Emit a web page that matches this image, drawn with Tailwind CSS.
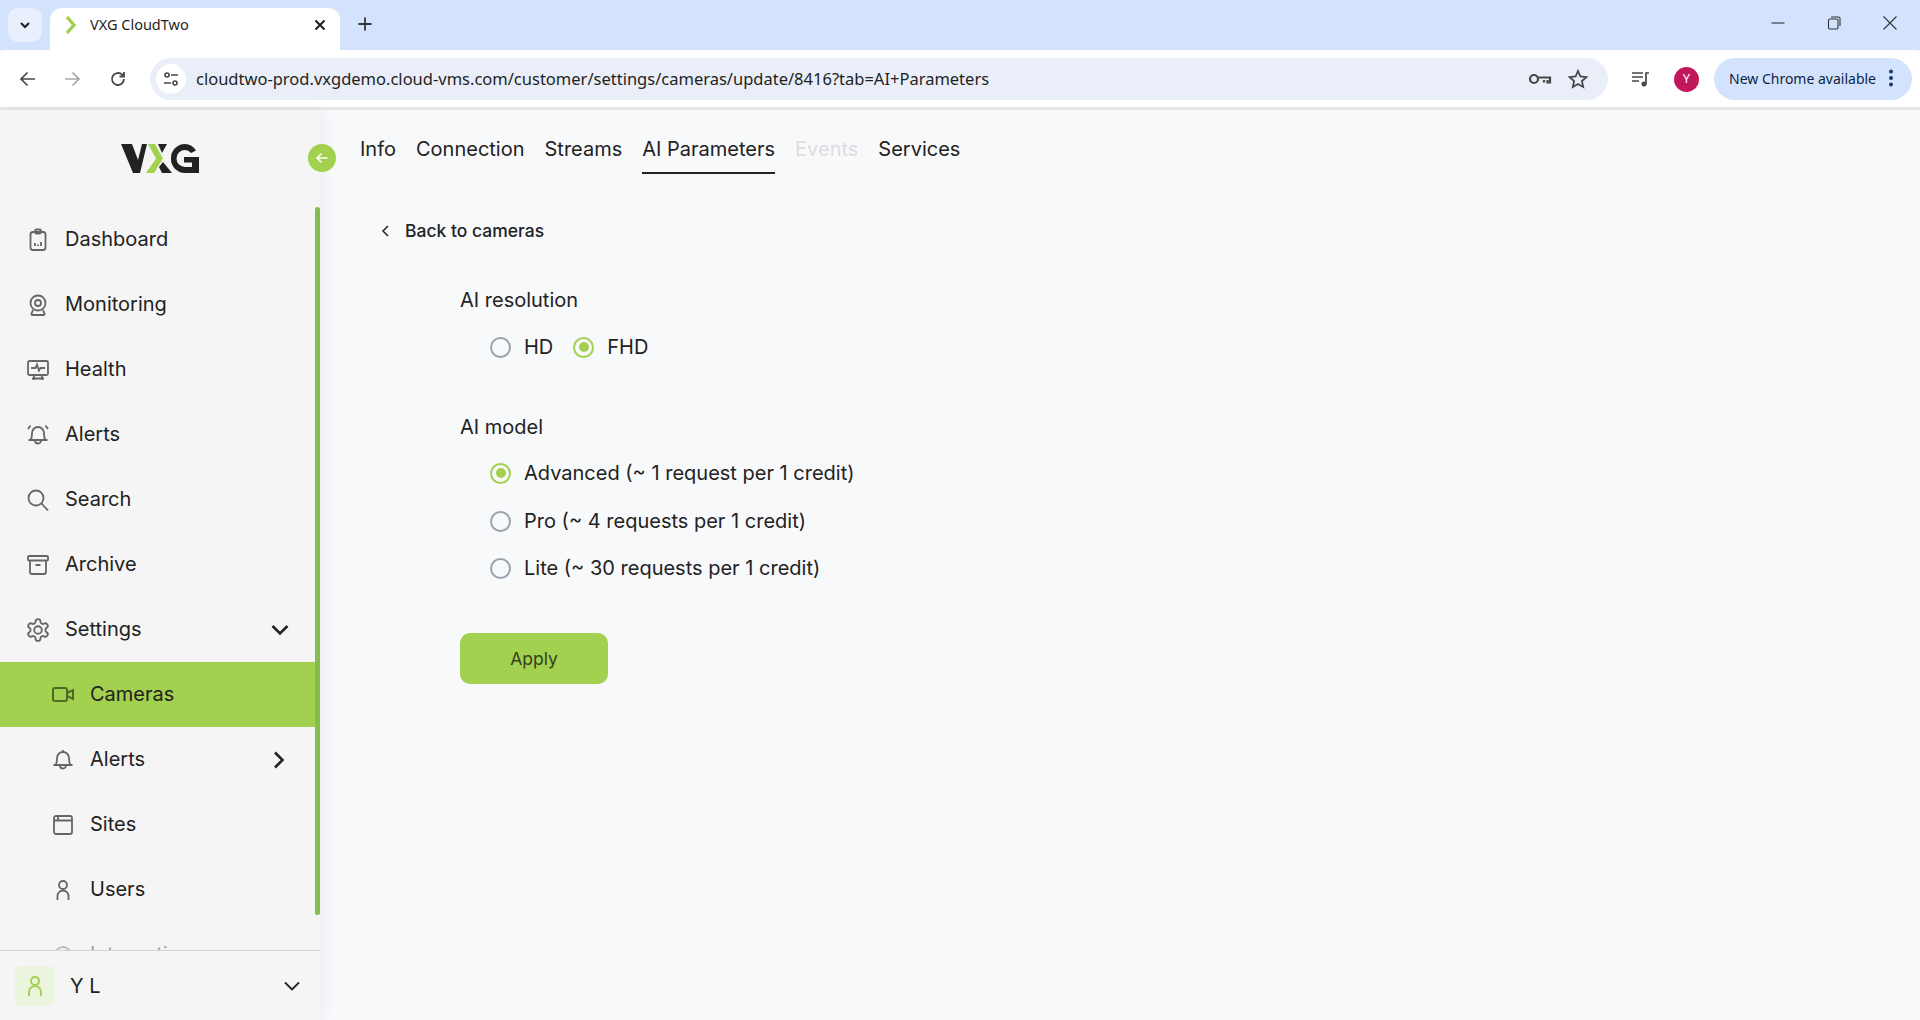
<!DOCTYPE html>
<html lang="en">
<head>
    <meta charset="UTF-8">
    <title>VXG CloudTwo</title>
    <script src="https://cdn.jsdelivr.net/npm/@tailwindcss/browser@4"></script>
</head>
<body class="h-[1020px] w-[1920px] overflow-hidden flex flex-col bg-[#f8f9fb] font-['Inter',sans-serif] text-[#222222]">

    <!-- browser tab strip -->
    <div class="h-[50px] shrink-0 bg-[#d3e3fd] flex items-end relative font-['Noto_Sans',sans-serif]">
        <div class="w-[34px] h-[34px] ml-[8px] mb-[8px] rounded-[10px] bg-[#e9f0fd] flex items-center justify-center">
            <svg class="w-4 h-4" viewBox="0 0 16 16" fill="none" stroke="#1f1f1f" stroke-width="2"><path d="M4 6l4 4 4-4"/></svg>
        </div>
        <div class="w-[290px] h-[42px] ml-[8px] bg-white rounded-t-[12px] flex items-center pl-[14px] pr-[12px] pb-[8px]">
            <svg class="w-[16px] h-[20px] shrink-0" viewBox="0 0 16 20" fill="none" stroke="#a2d04f" stroke-width="3.4"><path d="M3 2l7 8-7 8"/></svg>
            <span class="ml-[10px] flex-1 text-[14.5px] text-[#1f1f1f]">VXG CloudTwo</span>
            <svg class="w-[16px] h-[16px]" viewBox="0 0 16 16" fill="none" stroke="#1f1f1f" stroke-width="2"><path d="M3.5 3.5l9 9M12.5 3.5l-9 9"/></svg>
        </div>
        <svg class="w-[18px] h-[18px] ml-[16px] mb-[17px]" viewBox="0 0 18 18" fill="none" stroke="#333" stroke-width="1.8"><path d="M9 2.5v13M2.5 9h13"/></svg>
        <div class="ml-auto flex items-center h-full pb-[4px] pr-[22px] gap-[40px]">
            <svg class="w-[16px] h-[16px]" viewBox="0 0 16 16" fill="none" stroke="#333" stroke-width="1.1"><path d="M1.5 8h13"/></svg>
            <svg class="w-[16px] h-[16px]" viewBox="0 0 16 16" fill="none" stroke="#333" stroke-width="1.1"><rect x="2.5" y="4" width="9.5" height="10" rx="1.5"/><path d="M5 2h7.5a1.5 1.5 0 0 1 1.5 1.5V11"/></svg>
            <svg class="w-[16px] h-[16px]" viewBox="0 0 16 16" fill="none" stroke="#333" stroke-width="1.1"><path d="M1.5 1.5l13 13M14.5 1.5l-13 13"/></svg>
        </div>
    </div>

    <!-- browser toolbar -->
    <div class="h-[60px] shrink-0 bg-white border-b-[3px] border-[#e6e6e6] rounded-t-[8px] flex items-center pt-[1px] pl-[18px] pr-[8px] font-['Noto_Sans',sans-serif]">
        <svg class="w-[20px] h-[20px]" viewBox="0 0 20 20" fill="none" stroke="#474747" stroke-width="1.7"><path d="M17 10H3.5M9.5 3.5L3 10l6.5 6.5"/></svg>
        <svg class="w-[20px] h-[20px] ml-[24px]" viewBox="0 0 20 20" fill="none" stroke="#a8a8a8" stroke-width="1.7"><path d="M3 10h13.5M10.500 3.500L17 10l-6.500 6.500"/></svg>
        <svg class="w-[20px] h-[20px] ml-[26px]" viewBox="0 0 20 20" fill="none" stroke="#474747" stroke-width="1.8"><path d="M16 10a6 6 0 1 1-1.8-4.3L16 7.5M16 3v4.5h-4.5"/></svg>
        <div class="w-[1458px] h-[42px] ml-[22px] rounded-full bg-[#e9eef8] flex items-center pl-[6px] pr-[19px]">
            <div class="w-[30px] h-[30px] rounded-full bg-white flex items-center justify-center">
                <svg class="w-[18px] h-[18px]" viewBox="0 0 18 18" fill="none" stroke="#474747" stroke-width="1.6"><circle cx="5" cy="5" r="2"/><path d="M9 5h7M2 13h7"/><circle cx="13" cy="13" r="2"/></svg>
            </div>
            <span class="ml-[10px] flex-1 text-[16.5px] text-[#1f1f1f] whitespace-nowrap">cloudtwo-prod.vxgdemo.cloud-vms.com/customer/settings/cameras/update/8416?tab=AI+Parameters</span>
            <svg class="w-[24px] h-[16px]" viewBox="0 0 24 16" fill="none" stroke="#474747" stroke-width="2.2"><circle cx="6" cy="8" r="4"/><path d="M10 6.5h12v5h-2.5V9M16 9v2.5"/></svg>
            <svg class="w-[22px] h-[22px] ml-[15px]" viewBox="0 0 22 22" fill="none" stroke="#474747" stroke-width="1.8"><path d="M11 3l2.400 5.500 6 .6-4.500 4 1.300 5.900L11 16l-5.200 3 1.300-5.900-4.500-4 6-.6z"/></svg>
        </div>
        <svg class="w-[22px] h-[22px] ml-[22px]" viewBox="0 0 22 22" fill="none" stroke="#474747" stroke-width="1.7"><path d="M2 5h11M2 9h11M2 13h7"/><circle cx="14" cy="16" r="2.5" fill="#474747" stroke="none"/><path d="M16 16V5h3"/></svg>
        <div class="w-[25px] h-[25px] ml-[22px] rounded-full bg-[#c2185b] text-white text-[13px] flex items-center justify-center">Y</div>
        <div class="w-[198px] h-[42px] ml-[15px] rounded-full bg-[#d3e3fd] flex items-center pl-[15px] pb-[2px] text-[#0b1f45] text-[14px] whitespace-nowrap">
            New Chrome available
            <svg class="w-[4px] h-[18px] ml-[13px]" viewBox="0 0 4 18" fill="#1b3a6b"><circle cx="2" cy="2.5" r="2"/><circle cx="2" cy="9" r="2"/><circle cx="2" cy="15.5" r="2"/></svg>
        </div>
    </div>

    <div class="flex-1 flex min-h-0">
        <!-- sidebar -->
        <aside class="w-[320px] shrink-0 bg-[#f5f5f5] flex flex-col relative shadow-[4px_0_12px_rgba(30,40,70,0.05)]">
            <div class="h-[97px] shrink-0 flex items-start justify-center pt-[33px]">
                <svg class="w-[78px] h-[30px]" viewBox="0 0 78 30">
                    <polygon points="0,1 11,1 17,17 21,1 26,1 19,30 12,30" fill="#222"/>
                    <polygon points="27,1 34,1 42,15.5 33,30 25,30 35,15.5" fill="#a2d04f"/>
                    <polygon points="37,1 46,1 41,10" fill="#222"/>
                    <polygon points="42,19 51,30 41,30 38,24" fill="#222"/>
                    <path d="M75 7.5A14 14 0 0 0 64 1a14 14 0 0 0-14 14.5A14 14 0 0 0 64 30h14V14H63v5.5h8V24h-7a8.500 8.500 0 0 1 0-17 8 8 0 0 1 6 3z" fill="#222"/>
                </svg>
            </div>

            <div class="flex-1 min-h-0 overflow-hidden text-[20px] relative">
                <div class="absolute right-0 top-0 w-[5px] h-[708px] rounded-full bg-[#84bd4b]"></div>

                <div class="h-[65px] flex items-center pl-[27px]">
                    <svg class="w-[22px] h-[24px] text-[#666]" viewBox="0 0 22 24" fill="none" stroke="currentColor" stroke-width="1.8"><rect x="3.5" y="4" width="15" height="18" rx="2.5"/><rect x="8" y="1.5" width="6" height="4" rx="1.5"/><path d="M8 18v-3M11 18v-1.5M14 18v-4"/></svg>
                    <span class="ml-[16px] -mt-[2px]">Dashboard</span>
                </div>
                <div class="h-[65px] flex items-center pl-[27px]">
                    <svg class="w-[22px] h-[24px] text-[#666]" viewBox="0 0 22 24" fill="none" stroke="currentColor" stroke-width="1.8"><circle cx="11" cy="10" r="7.5"/><circle cx="11" cy="10" r="3"/><path d="M6 17l-1.5 3.5a1 1 0 0 0 1 1.5h11a1 1 0 0 0 1-1.5L16 17"/></svg>
                    <span class="ml-[16px] -mt-[2px]">Monitoring</span>
                </div>
                <div class="h-[65px] flex items-center pl-[27px]">
                    <svg class="w-[22px] h-[24px] text-[#666]" viewBox="0 0 22 24" fill="none" stroke="currentColor" stroke-width="1.8"><rect x="1" y="3" width="20" height="14" rx="1.5"/><path d="M4 10h4.5l1.5-3.5 2 6 1.5-2.5H18M7 17v5M15 17v5M5 20.5h12"/></svg>
                    <span class="ml-[16px] -mt-[2px]">Health</span>
                </div>
                <div class="h-[65px] flex items-center pl-[27px]">
                    <svg class="w-[22px] h-[24px] text-[#666]" viewBox="0 0 22 24" fill="none" stroke="currentColor" stroke-width="1.8"><path d="M3.5 17c1.500-2 1.500-4 1.500-7a6 6 0 0 1 12 0c0 3 0 5 1.500 7zM1.500 17h19M8 17.500a3 3 0 0 0 6 0M1 6l2.500-3.500M21 6l-2.500-3.500"/></svg>
                    <span class="ml-[16px] -mt-[2px]">Alerts</span>
                </div>
                <div class="h-[65px] flex items-center pl-[27px]">
                    <svg class="w-[22px] h-[24px] text-[#666]" viewBox="0 0 22 24" fill="none" stroke="currentColor" stroke-width="1.8"><circle cx="9" cy="10" r="7.5"/><path d="M14.5 15.5l6.5 7"/></svg>
                    <span class="ml-[16px] -mt-[2px]">Search</span>
                </div>
                <div class="h-[65px] flex items-center pl-[27px]">
                    <svg class="w-[22px] h-[24px] text-[#666]" viewBox="0 0 22 24" fill="none" stroke="currentColor" stroke-width="1.8"><rect x="1" y="3" width="20" height="4.5" rx="1"/><path d="M3 7.5V19a2 2 0 0 0 2 2h12a2 2 0 0 0 2-2V7.5M8.5 12h5"/></svg>
                    <span class="ml-[16px] -mt-[2px]">Archive</span>
                </div>
                <div class="h-[65px] flex items-center pl-[25px] pr-[30px]">
                    <svg class="w-[26px] h-[26px] text-[#666]" viewBox="0 0 24 24" fill="none" stroke="currentColor" stroke-width="1.7"><path d="M12.22 2h-.44a2 2 0 0 0-2 2v.18a2 2 0 0 1-1 1.730l-.43.25a2 2 0 0 1-2 0l-.15-.08a2 2 0 0 0-2.730.73l-.22.38a2 2 0 0 0 .73 2.730l.15.1a2 2 0 0 1 1 1.720v.51a2 2 0 0 1-1 1.740l-.15.09a2 2 0 0 0-.73 2.730l.22.38a2 2 0 0 0 2.730.73l.15-.08a2 2 0 0 1 2 0l.43.25a2 2 0 0 1 1 1.730V20a2 2 0 0 0 2 2h.44a2 2 0 0 0 2-2v-.18a2 2 0 0 1 1-1.730l.43-.25a2 2 0 0 1 2 0l.15.08a2 2 0 0 0 2.730-.73l.22-.39a2 2 0 0 0-.73-2.730l-.15-.08a2 2 0 0 1-1-1.740v-.5a2 2 0 0 1 1-1.740l.15-.09a2 2 0 0 0 .73-2.730l-.22-.38a2 2 0 0 0-2.730-.73l-.15.08a2 2 0 0 1-2 0l-.43-.25a2 2 0 0 1-1-1.730V4a2 2 0 0 0-2-2z"/><circle cx="12" cy="12" r="3.5"/></svg>
                    <span class="ml-[14px] -mt-[2px] flex-1">Settings</span>
                    <svg class="w-[20px] h-[20px]" viewBox="0 0 20 20" fill="none" stroke="#222" stroke-width="2.6"><path d="M2.5 6l7.5 7.5L17.5 6"/></svg>
                </div>
                <div class="h-[65px] flex items-center pl-[52px] mr-[5px] bg-[#a2d04f]">
                    <svg class="w-[22px] h-[24px] text-[#4b6b24]" viewBox="0 0 22 24" fill="none" stroke="currentColor" stroke-width="2"><rect x="1" y="5" width="14" height="13" rx="2"/><path d="M15 10l6-3v9l-6-3"/></svg>
                    <span class="ml-[16px] -mt-[2px]">Cameras</span>
                </div>
                <div class="h-[65px] flex items-center pl-[52px] pr-[31px]">
                    <svg class="w-[22px] h-[24px] text-[#666]" viewBox="0 0 22 24" fill="none" stroke="currentColor" stroke-width="1.8"><path d="M3.5 17c1.500-2 1.500-4 1.500-7a6 6 0 0 1 12 0c0 3 0 5 1.500 7zM1.500 17h19M8 17.500a3 3 0 0 0 6 0M11 4V2"/></svg>
                    <span class="ml-[16px] -mt-[2px] flex-1">Alerts</span>
                    <svg class="w-[20px] h-[20px]" viewBox="0 0 20 20" fill="none" stroke="#222" stroke-width="2.6"><path d="M6 2.5l7.5 7.5L6 17.5"/></svg>
                </div>
                <div class="h-[65px] flex items-center pl-[52px]">
                    <svg class="w-[22px] h-[24px] text-[#666]" viewBox="0 0 22 24" fill="none" stroke="currentColor" stroke-width="1.8"><rect x="2" y="3" width="18" height="18" rx="2"/><path d="M2 7.5h18M6 3v4.5"/></svg>
                    <span class="ml-[16px] -mt-[2px]">Sites</span>
                </div>
                <div class="h-[65px] flex items-center pl-[52px]">
                    <svg class="w-[22px] h-[24px] text-[#666]" viewBox="0 0 22 24" fill="none" stroke="currentColor" stroke-width="1.8"><circle cx="11" cy="7" r="4"/><path d="M5.5 22v-4a5.5 5.5 0 0 1 11 0v4"/></svg>
                    <span class="ml-[16px] -mt-[2px]">Users</span>
                </div>
                <div class="h-[65px] flex items-center pl-[52px] opacity-40">
                    <svg class="w-[22px] h-[24px] text-[#666]" viewBox="0 0 22 24" fill="none" stroke="currentColor" stroke-width="1.8"><circle cx="11" cy="12" r="8"/></svg>
                    <span class="ml-[16px] -mt-[2px]">Integrations</span>
                </div>
            </div>

            <div class="h-[70px] shrink-0 border-t border-[#d4d4d4] bg-[#f5f5f5] flex items-center pl-[15px] pr-[19px] relative">
                <div class="w-[40px] h-[40px] rounded-[6px] bg-[#ebf5dd] flex items-center justify-center">
                    <svg class="w-[22px] h-[24px] text-[#a2d04f]" viewBox="0 0 22 24" fill="none" stroke="currentColor" stroke-width="2"><circle cx="11" cy="7" r="4"/><path d="M5 22v-4a6 6 0 0 1 12 0v4"/></svg>
                </div>
                <span class="ml-[15px] flex-1 text-[20px]">Y L</span>
                <svg class="w-[18px] h-[18px]" viewBox="0 0 18 18" fill="none" stroke="#222" stroke-width="1.8"><path d="M2 5.5l7 7 7-7"/></svg>
            </div>

            <!-- collapse toggle -->
            <div class="absolute left-[308px] top-[34px] w-[28px] h-[28px] rounded-full bg-[#a2d04f] flex items-center justify-center">
                <svg class="w-[14px] h-[14px]" viewBox="0 0 14 14" fill="none" stroke="white" stroke-width="1.5"><path d="M12.5 7H2M6.5 2.5L2 7l4.5 4.5"/></svg>
            </div>
        </aside>

        <!-- content -->
        <main class="flex-1 min-w-0">
            <nav class="flex gap-[20px] pl-[40px] h-[64px] text-[20px]">
                <div class="pt-[24px]">Info</div>
                <div class="pt-[24px]">Connection</div>
                <div class="pt-[24px]">Streams</div>
                <div class="pt-[24px] border-b-2 border-[#222222]">AI Parameters</div>
                <div class="pt-[24px] text-[#dcdddf]">Events</div>
                <div class="pt-[24px]">Services</div>
            </nav>

            <div class="flex items-center mt-[45px] ml-[60px] text-[17.5px] font-medium leading-[24px]">
                <svg class="w-[12px] h-[14px]" viewBox="0 0 12 14" fill="none" stroke="#222" stroke-width="1.5"><path d="M8 2L3 7l5 5"/></svg>
                <span class="ml-[13px]">Back to cameras</span>
            </div>

            <div class="ml-[140px] mt-[42px] text-[20px]">
                <div class="leading-[30px]">AI resolution</div>
                <div class="flex items-center mt-[16px] ml-[30px] h-[32px]">
                    <span class="w-[21px] h-[21px] rounded-full border-[2.5px] border-[#9ca3af]"></span>
                    <span class="ml-[13px]">HD</span>
                    <span class="w-[21px] h-[21px] rounded-full border-[2.5px] border-[#a2d04f] ml-[20px] flex items-center justify-center"><span class="w-[10px] h-[10px] rounded-full bg-[#a2d04f]"></span></span>
                    <span class="ml-[13px]">FHD</span>
                </div>

                <div class="leading-[30px] mt-[49px]">AI model</div>
                <div class="flex items-center mt-[15px] ml-[30px] h-[32px]">
                    <span class="w-[21px] h-[21px] rounded-full border-[2.5px] border-[#a2d04f] flex items-center justify-center"><span class="w-[10px] h-[10px] rounded-full bg-[#a2d04f]"></span></span>
                    <span class="ml-[13px]">Advanced (~ 1 request per 1 credit)</span>
                </div>
                <div class="flex items-center mt-[16px] ml-[30px] h-[32px]">
                    <span class="w-[21px] h-[21px] rounded-full border-[2.5px] border-[#9ca3af]"></span>
                    <span class="ml-[13px]">Pro (~ 4 requests per 1 credit)</span>
                </div>
                <div class="flex items-center mt-[15px] ml-[30px] h-[32px]">
                    <span class="w-[21px] h-[21px] rounded-full border-[2.5px] border-[#9ca3af]"></span>
                    <span class="ml-[13px]">Lite (~ 30 requests per 1 credit)</span>
                </div>

                <button class="w-[148px] h-[51px] mt-[49px] pt-[2px] rounded-[10px] bg-[#a2d04f] text-[17.5px] text-[#33401c] flex items-center justify-center">Apply</button>
            </div>
        </main>
    </div>
</body>
</html>
